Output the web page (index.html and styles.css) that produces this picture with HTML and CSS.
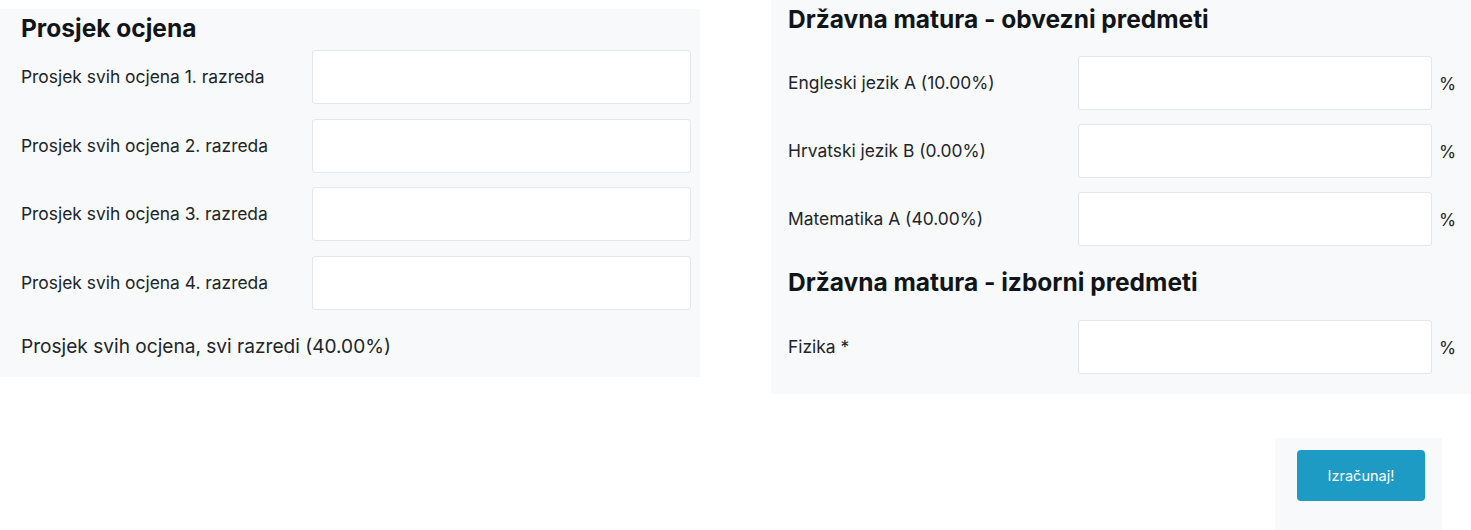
FILE: index.html
```html
<!DOCTYPE html>
<html lang="hr">
<head>
<meta charset="utf-8">
<title>Kalkulator bodova</title>
<link rel="stylesheet" href="styles.css">
</head>
<body>
<div class="page">
  <section class="panel panel-left">
    <h2 class="heading">Prosjek ocjena</h2>
    <div class="rows">
      <div class="row"><label class="label">Prosjek svih ocjena 1. razreda</label><input class="field" type="text"></div>
      <div class="row"><label class="label">Prosjek svih ocjena 2. razreda</label><input class="field" type="text"></div>
      <div class="row"><label class="label">Prosjek svih ocjena 3. razreda</label><input class="field" type="text"></div>
      <div class="row"><label class="label">Prosjek svih ocjena 4. razreda</label><input class="field" type="text"></div>
    </div>
    <p class="total">Prosjek svih ocjena, svi razredi (40.00%)</p>
  </section>
  <div class="right-col">
    <section class="panel panel-right">
      <h2 class="heading">Državna matura - obvezni predmeti</h2>
      <div class="rows rows-right">
        <div class="row row-pct"><label class="label">Engleski jezik A (10.00%)</label><input class="field" type="text"><span class="pct">%</span></div>
        <div class="row row-pct"><label class="label">Hrvatski jezik B (0.00%)</label><input class="field" type="text"><span class="pct">%</span></div>
        <div class="row row-pct"><label class="label">Matematika A (40.00%)</label><input class="field" type="text"><span class="pct">%</span></div>
      </div>
      <h2 class="heading heading-second">Državna matura - izborni predmeti</h2>
      <div class="rows rows-right rows-last">
        <div class="row row-pct"><label class="label">Fizika *</label><input class="field" type="text"><span class="pct">%</span></div>
      </div>
    </section>
    <div class="actions">
      <button class="btn" type="button">Izračunaj!</button>
    </div>
  </div>
</div>
</body>
</html>
```

FILE: styles.css
```css
* { box-sizing: border-box; }
html, body { margin: 0; padding: 0; background: #ffffff; }
body {
  font-family: "Inter", "Open Sans", "Liberation Sans", sans-serif;
  color: #212529;
  width: 1471px;
  height: 530px;
  overflow: hidden;
}
.page {
  display: grid;
  grid-template-columns: 700px 700px;
  column-gap: 71px;
  align-items: start;
}
.panel { background: #f8f9fa; }
.panel-left {
  margin-top: 9px;
  padding: 4px 9px 19px 21px;
}
.heading {
  margin: 0;
  font-size: 24.5px;
  line-height: 30px;
  font-weight: 700;
  color: #111418;
  letter-spacing: 0;
}
.rows {
  display: flex;
  flex-direction: column;
  gap: 14.67px;
  margin-top: 7px;
}
.row {
  display: grid;
  grid-template-columns: 291px 1fr;
  align-items: center;
}
.label {
  font-size: 17.4px;
  line-height: 22px;
  color: #212529;
}
.field {
  height: 54px;
  width: 100%;
  border: 1px solid #e4e6e9;
  border-radius: 3px;
  background: #ffffff;
  font: inherit;
  padding: 0 12px;
  margin: 0;
}
.total {
  margin: 24px 0 0;
  font-size: 19.1px;
  line-height: 24px;
  color: #212529;
}
.right-col {
  display: flex;
  flex-direction: column;
}
.panel-right {
  padding: 4px 0 20px 17px;
}
.rows-right {
  margin-top: 22px;
  gap: 14px;
}
.rows-last { margin-top: 23px; }
.row-pct {
  grid-template-columns: 290px 354px 1fr;
}
.pct {
  font-size: 17.4px;
  padding-left: 7px;
  color: #212529;
}
.heading-second { margin-top: 21px; }
.actions {
  align-self: flex-start;
  margin: 44px 0 0 504px;
  width: 167px;
  height: 100px;
  padding: 12px 17px 0 22px;
  background: #f8f9fa;
}
.btn {
  width: 128px;
  height: 51px;
  border: 0;
  border-radius: 4px;
  background: #1e9bc5;
  color: #ffffff;
  font-family: inherit;
  font-size: 14.5px;
  font-weight: 400;
  cursor: pointer;
}
```
